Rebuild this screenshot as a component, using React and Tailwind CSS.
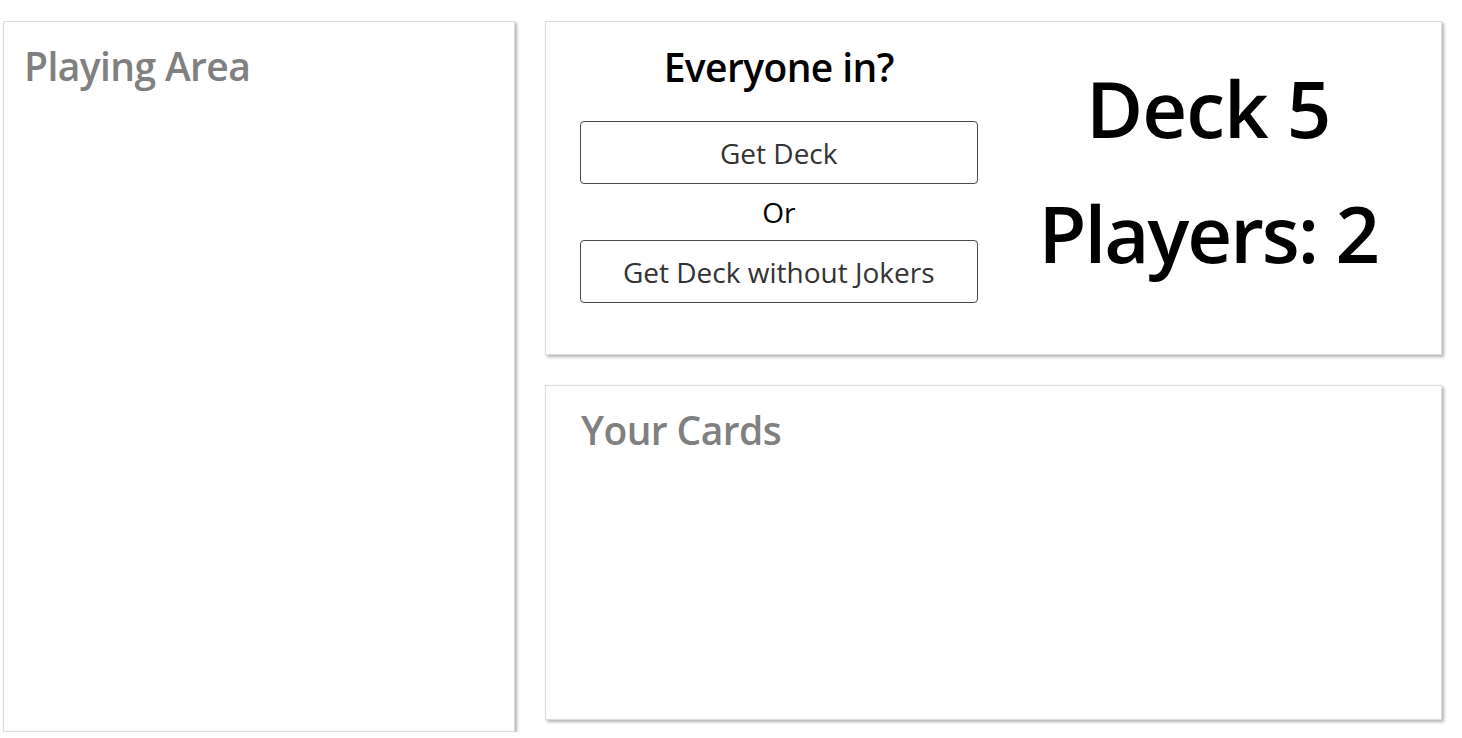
import React from 'react'

const panel = 'bg-white border border-[#dcdcdc] shadow-[2px_2px_3px_rgba(0,0,0,0.3)]'
const button = 'w-full h-[63px] rounded-[4px] border border-[#4a4a4a] bg-white text-[28px] text-[#333333]'
const heading = 'text-[39px] font-semibold tracking-[-0.6px] leading-[54px]'

export default function App() {
  return (
    <div className="flex gap-[30px] pl-[3px] pt-[21px] font-['Open_Sans',sans-serif]">
      <div className={`${panel} w-[512px] h-[711px] px-[20px] pt-[17px]`}>
        <h2 className={`${heading} text-[#808080]`}>Playing Area</h2>
      </div>

      <div className="flex flex-col gap-[30px] w-[897px]">
        <div className={`${panel} h-[334px] grid grid-cols-2 gap-[32px] px-[34px]`}>
          <div className="flex flex-col items-center">
            <h2 className={`${heading} mt-[18px] text-black`}>Everyone in?</h2>
            <button className={`${button} mt-[27px]`}>Get Deck</button>
            <div className="text-[28px] text-black leading-[56px]">Or</div>
            <button className={button}>Get Deck without Jokers</button>
          </div>
          <div className="flex flex-col items-center pt-[24px]">
            <div className="text-[78px] font-semibold text-black leading-[124px] tracking-[-1px]">Deck 5</div>
            <div className="text-[78px] font-semibold text-black leading-[126px] tracking-[-2px]">Players: 2</div>
          </div>
        </div>

        <div className={`${panel} h-[335px] px-[35px] pt-[17px]`}>
          <h2 className={`${heading} text-[#808080]`}>Your Cards</h2>
        </div>
      </div>
    </div>
  )
}
